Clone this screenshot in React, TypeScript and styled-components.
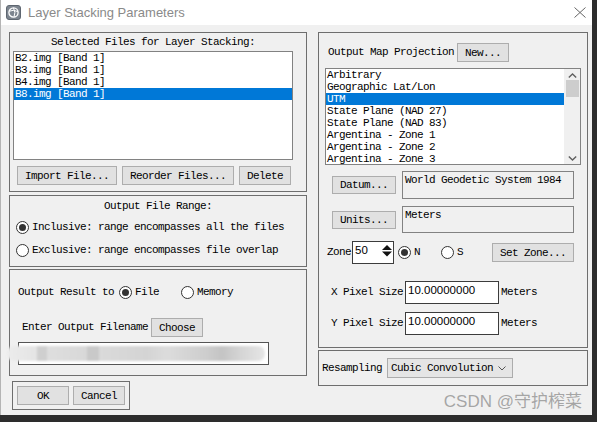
import styled, { createGlobalStyle } from "styled-components";

const mono = `"Liberation Mono", "DejaVu Sans Mono", monospace`;
const sans = `"Liberation Sans", Arial, sans-serif`;

const GlobalStyle = createGlobalStyle`
  html, body {
    margin: 0;
    padding: 0;
    background: #2d2d2d;
  }
  * {
    box-sizing: border-box;
  }
`;

const Window = styled.div`
  position: relative;
  width: 592px;
  height: 415px;
  background: #f0f0f0;
  border-left: 1px solid #b4b4b4;
  display: flex;
  flex-direction: column;
  font-family: ${mono};
  font-size: 11px;
  letter-spacing: -0.6px;
  color: #000;
  overflow: hidden;
`;

const TitleBar = styled.div`
  height: 25px;
  flex: none;
  background: #fff;
  display: flex;
  align-items: center;
  padding-left: 5px;
  padding-right: 6px;
`;

const TitleText = styled.span`
  margin-left: 7px;
  font-family: ${sans};
  font-size: 13px;
  letter-spacing: 0;
  color: #8a8a8a;
`;

const CloseBox = styled.span`
  margin-left: auto;
  display: flex;
`;

const Client = styled.div`
  display: flex;
  gap: 11px;
  padding: 7px 4px 0 8px;
`;

const Column = styled.div<{ $w: number }>`
  width: ${(p) => p.$w}px;
  display: flex;
  flex-direction: column;
`;

const GroupBox = styled.div<{ $h: number; $mt?: number }>`
  height: ${(p) => p.$h}px;
  margin-top: ${(p) => p.$mt ?? 0}px;
  border: 1px solid #6e6e6e;
  display: flex;
  flex-direction: column;
`;

const GroupTitle = styled.div<{ $w?: number; $ml?: number; $mt?: number }>`
  width: ${(p) => (p.$w ? `${p.$w}px` : "auto")};
  margin-left: ${(p) => p.$ml ?? 0}px;
  margin-top: ${(p) => p.$mt ?? 0}px;
  height: 12px;
  line-height: 12px;
  text-align: center;
`;

const ListBox = styled.div<{ $w: number; $h: number; $ml: number; $mt: number }>`
  width: ${(p) => p.$w}px;
  height: ${(p) => p.$h}px;
  margin-left: ${(p) => p.$ml}px;
  margin-top: ${(p) => p.$mt}px;
  background: #fff;
  border: 1px solid #828282;
  display: flex;
  overflow: hidden;
  flex: none;
`;

const ListItems = styled.div`
  flex: 1;
  display: flex;
  flex-direction: column;
`;

const ListRow = styled.div<{ $selected?: boolean }>`
  height: 12px;
  line-height: 12px;
  padding-left: 1px;
  white-space: nowrap;
  flex: none;
  background: ${(p) => (p.$selected ? "#0078d7" : "transparent")};
  color: ${(p) => (p.$selected ? "#fff" : "#000")};
`;

const ScrollBar = styled.div`
  width: 16px;
  flex: none;
  background: #f0f0f0;
  display: flex;
  flex-direction: column;
  align-items: center;
  justify-content: space-between;
  padding: 4px 0 3px;
`;

const ScrollThumb = styled.div`
  width: 13px;
  height: 17px;
  background: #cdcdcd;
  margin-top: 2px;
`;

const ScrollSpacer = styled.div`
  flex: 1;
`;

const Row = styled.div<{ $mt?: number; $pl?: number; $h?: number; $gap?: number }>`
  display: flex;
  align-items: center;
  margin-top: ${(p) => p.$mt ?? 0}px;
  padding-left: ${(p) => p.$pl ?? 0}px;
  height: ${(p) => (p.$h ? `${p.$h}px` : "auto")};
  gap: ${(p) => p.$gap ?? 0}px;
  white-space: nowrap;
`;

const Button = styled.button<{ $w: number; $h?: number; $ml?: number }>`
  width: ${(p) => p.$w}px;
  height: ${(p) => p.$h ?? 19}px;
  margin-left: ${(p) => p.$ml ?? 0}px;
  flex: none;
  padding: 0;
  background: #e1e1e1;
  border: 1px solid #adadad;
  font-family: ${mono};
  font-size: 11px;
  letter-spacing: -0.6px;
  color: #000;
  white-space: nowrap;
`;

const Label = styled.span<{ $ml?: number; $mr?: number }>`
  margin-left: ${(p) => p.$ml ?? 0}px;
  margin-right: ${(p) => p.$mr ?? 0}px;
  line-height: 13px;
`;

const RadioCircle = styled.span<{ $checked?: boolean; $ml?: number }>`
  width: 13px;
  height: 13px;
  flex: none;
  margin-left: ${(p) => p.$ml ?? 0}px;
  margin-right: 3px;
  border-radius: 50%;
  border: 1px solid #333;
  background: #fff;
  display: flex;
  align-items: center;
  justify-content: center;

  &::after {
    content: "";
    width: 7px;
    height: 7px;
    border-radius: 50%;
    background: ${(p) => (p.$checked ? "#333" : "transparent")};
  }
`;

const ReadBox = styled.div<{ $h: number }>`
  width: 172px;
  height: ${(p) => p.$h}px;
  border: 1px solid #828282;
  background: #f0f0f0;
  padding: 2px 0 0 2px;
  line-height: 12px;
`;

const Field = styled.div<{ $w: number; $ml?: number }>`
  width: ${(p) => p.$w}px;
  height: 23px;
  margin-left: ${(p) => p.$ml ?? 0}px;
  flex: none;
  background: #fff;
  border: 1px solid #3c3c3c;
  font-family: ${sans};
  font-size: 11.5px;
  letter-spacing: 0;
  padding: 2px 0 0 2px;
  display: flex;
  justify-content: space-between;
  align-items: flex-start;
`;

const Spinner = styled.span`
  margin-top: 1px;
  margin-right: 1px;
  display: flex;
`;

const FileField = styled.div`
  position: relative;
  width: 251px;
  height: 23px;
  background: #fff;
  border: 1px solid #555;
  flex: none;
`;

const Blur = styled.div`
  position: absolute;
  left: -12px;
  top: 3px;
  width: 258px;
  height: 15px;
  border-radius: 7px;
  filter: blur(1.2px);
  background: linear-gradient(
    90deg,
    #ececec 0,
    #e4e4e4 30px,
    #cfcfcf 30px,
    #cfcfcf 40px,
    #dedede 40px,
    #d8d8d8 80px,
    #c9c9c9 80px,
    #c9c9c9 92px,
    #dadada 92px,
    #d4d4d4 140px,
    #dcdcdc 160px,
    #cdcdcd 200px,
    #c4c4c4 215px,
    #d2d2d2 230px,
    #e6e6e6 258px
  );
`;

const Select = styled.div`
  width: 126px;
  height: 20px;
  margin-left: 5px;
  background: #e5e5e5;
  border: 1px solid #acacac;
  display: flex;
  align-items: center;
  justify-content: space-between;
  padding: 0 6px 0 3px;
`;

const Watermark = styled.div`
  position: absolute;
  right: 10px;
  bottom: 3px;
  font-family: "Liberation Sans", "Noto Sans CJK SC", sans-serif;
  font-size: 17px;
  letter-spacing: 0;
  color: rgba(140, 140, 140, 0.75);
`;

const files = ["B2.img [Band 1]", "B3.img [Band 1]", "B4.img [Band 1]", "B8.img [Band 1]"];

const projections = [
  "Arbitrary",
  "Geographic Lat/Lon",
  "UTM",
  "State Plane (NAD 27)",
  "State Plane (NAD 83)",
  "Argentina - Zone 1",
  "Argentina - Zone 2",
  "Argentina - Zone 3",
];

const AppIcon = () => (
  <svg width="15" height="15" viewBox="0 0 15 15">
    <rect x="0.5" y="0.5" width="14" height="14" rx="2.5" fill="#7d858f" stroke="#5e6670" />
    <circle cx="7.5" cy="7.5" r="4.6" fill="none" stroke="#fff" strokeWidth="1.3" />
    <path d="M3.2 6.2 Q7.5 4.2 11.8 6.6" fill="none" stroke="#fff" strokeWidth="1" />
    <path d="M7.5 2.9 Q10 7.5 8 12" fill="none" stroke="#fff" strokeWidth="1" />
  </svg>
);

const CloseIcon = () => (
  <svg width="12" height="11" viewBox="0 0 12 11">
    <path d="M0.5 0.5 L11.5 10.5 M11.5 0.5 L0.5 10.5" stroke="#666" strokeWidth="1" />
  </svg>
);

const Chevron = ({ up }: { up?: boolean }) => (
  <svg width="9" height="5" viewBox="0 0 9 5">
    <path
      d={up ? "M0.8 4.5 L4.5 1 L8.2 4.5" : "M0.8 0.5 L4.5 4 L8.2 0.5"}
      fill="none"
      stroke="#606060"
      strokeWidth="1.4"
    />
  </svg>
);

const SpinIcon = () => (
  <svg width="10" height="12" viewBox="0 0 10 12">
    <path d="M0 5 L5 0 L10 5 Z" fill="#111" />
    <path d="M0 6.5 L10 6.5 L5 11.5 Z" fill="#111" />
  </svg>
);

const App = () => {
  return (
    <>
      <GlobalStyle />
      <Window>
        <TitleBar>
          <AppIcon />
          <TitleText>Layer Stacking Parameters</TitleText>
          <CloseBox>
            <CloseIcon />
          </CloseBox>
        </TitleBar>

        <Client>
          <Column $w={298}>
            <GroupBox $h={160}>
              <GroupTitle $w={280} $ml={3} $mt={3}>
                Selected Files for Layer Stacking:
              </GroupTitle>
              <ListBox $w={280} $h={109} $ml={3} $mt={3}>
                <ListItems>
                  {files.map((f, i) => (
                    <ListRow key={f} $selected={i === files.length - 1}>
                      {f}
                    </ListRow>
                  ))}
                </ListItems>
              </ListBox>
              <Row $mt={6} $pl={7} $gap={5}>
                <Button $w={100}>Import File...</Button>
                <Button $w={112}>Reorder Files...</Button>
                <Button $w={52}>Delete</Button>
              </Row>
            </GroupBox>

            <GroupBox $h={72} $mt={3}>
              <GroupTitle $mt={4}>Output File Range:</GroupTitle>
              <Row $mt={9} $pl={6} $h={13}>
                <RadioCircle $checked />
                <Label>Inclusive: range encompasses all the files</Label>
              </Row>
              <Row $mt={10} $pl={6} $h={13}>
                <RadioCircle />
                <Label>Exclusive: range encompasses file overlap</Label>
              </Row>
            </GroupBox>

            <GroupBox $h={107} $mt={2}>
              <Row $mt={16} $pl={8} $h={13}>
                <Label $mr={5}>Output Result to</Label>
                <RadioCircle $checked />
                <Label>File</Label>
                <RadioCircle $ml={22} />
                <Label>Memory</Label>
              </Row>
              <Row $mt={19} $pl={12} $h={19}>
                <Label $mr={3}>Enter Output Filename</Label>
                <Button $w={52}>Choose</Button>
              </Row>
              <Row $mt={5} $pl={8}>
                <FileField>
                  <Blur />
                </FileField>
              </Row>
            </GroupBox>

            <Row $mt={5} $pl={3}>
              <GroupBox $h={29}>
                <Row $mt={4} $pl={4} $gap={4} style={{ paddingRight: 4 }}>
                  <Button $w={52}>OK</Button>
                  <Button $w={52}>Cancel</Button>
                </Row>
              </GroupBox>
            </Row>
          </Column>

          <Column $w={270}>
            <GroupBox $h={316}>
              <Row $mt={10} $pl={9} $h={19}>
                <Label $mr={3}>Output Map Projection</Label>
                <Button $w={52}>New...</Button>
              </Row>
              <ListBox $w={256} $h={97} $ml={6} $mt={6}>
                <ListItems>
                  {projections.map((p) => (
                    <ListRow key={p} $selected={p === "UTM"}>
                      {p}
                    </ListRow>
                  ))}
                </ListItems>
                <ScrollBar>
                  <Chevron up />
                  <ScrollThumb />
                  <ScrollSpacer />
                  <Chevron />
                </ScrollBar>
              </ListBox>
              <Row $mt={6} $pl={13} $gap={6}>
                <Button $w={64} $h={18}>Datum...</Button>
                <ReadBox $h={28}>World Geodetic System 1984</ReadBox>
              </Row>
              <Row $mt={7} $pl={13} $gap={6}>
                <Button $w={64} $h={18}>Units...</Button>
                <ReadBox $h={27}>Meters</ReadBox>
              </Row>
              <Row $mt={8} $pl={8} $h={23}>
                <Label>Zone</Label>
                <Field $w={42} $ml={1}>
                  50
                  <Spinner>
                    <SpinIcon />
                  </Spinner>
                </Field>
                <RadioCircle $checked $ml={4} />
                <Label>N</Label>
                <RadioCircle $ml={21} />
                <Label>S</Label>
                <Button $w={82} $ml={29}>Set Zone...</Button>
              </Row>
              <Row $mt={17} $pl={12} $h={23}>
                <Label>X Pixel Size</Label>
                <Field $w={94} $ml={2}>10.00000000</Field>
                <Label $ml={2}>Meters</Label>
              </Row>
              <Row $mt={8} $pl={12} $h={23}>
                <Label>Y Pixel Size</Label>
                <Field $w={94} $ml={2}>10.00000000</Field>
                <Label $ml={2}>Meters</Label>
              </Row>
            </GroupBox>

            <GroupBox $h={36} $mt={2}>
              <Row $pl={3} style={{ height: "100%" }}>
                <Label>Resampling</Label>
                <Select>
                  <span>Cubic Convolution</span>
                  <svg width="8" height="5" viewBox="0 0 8 5">
                    <path d="M0.5 0.5 L4 4 L7.5 0.5" fill="none" stroke="#555" strokeWidth="1" />
                  </svg>
                </Select>
              </Row>
            </GroupBox>
          </Column>
        </Client>

        <Watermark>CSDN @守护榨菜</Watermark>
      </Window>
    </>
  );
};

export default App;
